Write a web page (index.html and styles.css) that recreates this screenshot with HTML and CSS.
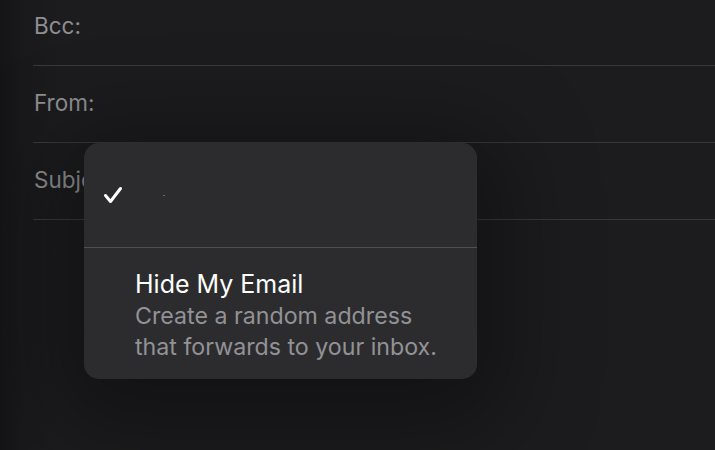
FILE: index.html
```html
<!DOCTYPE html>
<html lang="en">
<head>
  <meta charset="UTF-8" />
  <meta name="viewport" content="width=device-width, initial-scale=1.0"/>
  <title>New Message</title>
  <link rel="stylesheet" href="styles.css">
</head>
<body>
  <div class="compose">
    <div class="field"><span class="label">Bcc:</span></div>
    <div class="field"><span class="label">From:</span></div>
    <div class="field"><span class="label">Subject:</span></div>
  </div>

  <div class="menu">
    <div class="menu-item current">
      <svg class="check" width="20" height="18" viewBox="0 0 20 18">
        <path d="M2.5 9.5 L7.5 15.5 L17.5 2.5" fill="none" stroke="#fff" stroke-width="3" stroke-linecap="round" stroke-linejoin="round"/>
      </svg>
      <span class="dot"></span>
    </div>
    <div class="menu-item hide-email">
      <div class="title">Hide My Email</div>
      <div class="desc">Create a random address<br>that forwards to your inbox.</div>
    </div>
  </div>
</body>
</html>
```

FILE: styles.css
```css
body {
  margin: 0;
  height: 450px;
  overflow: hidden;
  font-family: Inter, "Noto Sans", sans-serif;
  background: linear-gradient(to right, #141416 0, #19191b 22px, #1c1c1e 60px);
  position: relative;
}
.compose {
  margin-top: -11px;
  padding-left: 33px;
}
.field {
  height: 76px;
  border-bottom: 1px solid #38383a;
  display: flex;
  align-items: center;
}
.label {
  color: #8e8e93;
  font-size: 22.5px;
  padding: 0 0 4px 1px;
}
.menu {
  position: absolute;
  left: 84px;
  top: 143px;
  width: 393px;
  height: 236px;
  background: #2c2c2e;
  border-radius: 15px;
  box-shadow: 0 20px 90px 30px rgba(0,0,0,0.35);
  overflow: hidden;
}
.menu-item.current {
  height: 104px;
  border-bottom: 1px solid #505052;
  display: flex;
  align-items: center;
  padding-left: 19px;
  gap: 40px;
}
.check {
  display: block;
}
.dot {
  width: 2px;
  height: 1px;
  background: #6a6a6c;
}
.hide-email {
  padding: 21px 0 0 51px;
}
.title {
  color: #fff;
  font-size: 25px;
  line-height: 30px;
}
.desc {
  color: #929297;
  font-size: 23.2px;
  line-height: 31px;
  margin-top: 2px;
}
```
